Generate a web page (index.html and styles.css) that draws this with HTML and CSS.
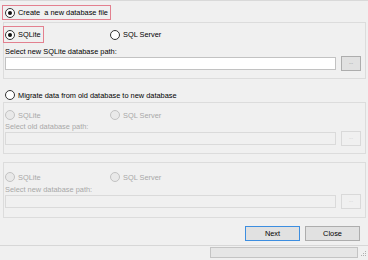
FILE: index.html
```html
<!DOCTYPE html>
<html lang="en">
<head>
    <meta charset="UTF-8">
    <title>Create Database</title>
    <link rel="stylesheet" href="styles.css">
</head>
<body>
    <div class="dialog">
        <!-- Create new database -->
        <label class="radio checked highlight create"><span class="dot"></span>Create  a new database file</label>

        <div class="group group-new">
            <div class="radio-row">
                <label class="radio checked highlight"><span class="dot"></span>SQLite</label>
                <label class="radio"><span class="dot"></span>SQL Server</label>
            </div>
            <p class="caption">Select new SQLite database path:</p>
            <div class="path-row">
                <div class="textbox"></div>
                <div class="browse">...</div>
            </div>
        </div>

        <!-- Migrate old database -->
        <label class="radio migrate"><span class="dot"></span>Migrate data from old database to new database</label>

        <div class="group group-old disabled">
            <div class="radio-row">
                <label class="radio"><span class="dot"></span>SQLite</label>
                <label class="radio"><span class="dot"></span>SQL Server</label>
            </div>
            <p class="caption">Select old database path:</p>
            <div class="path-row">
                <div class="textbox"></div>
                <div class="browse">...</div>
            </div>
        </div>

        <div class="group group-target disabled">
            <div class="radio-row">
                <label class="radio"><span class="dot"></span>SQLite</label>
                <label class="radio"><span class="dot"></span>SQL Server</label>
            </div>
            <p class="caption">Select new database path:</p>
            <div class="path-row">
                <div class="textbox"></div>
                <div class="browse">...</div>
            </div>
        </div>

        <div class="actions">
            <button class="next">Next</button>
            <button>Close</button>
        </div>

        <div class="statusbar">
            <div class="progress"></div>
            <svg class="grip" width="10" height="13" viewBox="0 0 10 13">
                <rect x="7" y="5" width="1" height="1" fill="#b0b0b0"/>
                <rect x="5" y="7" width="1" height="1" fill="#b0b0b0"/>
                <rect x="7" y="7" width="1" height="1" fill="#b0b0b0"/>
                <rect x="3" y="9" width="1" height="1" fill="#b0b0b0"/>
                <rect x="5" y="9" width="1" height="1" fill="#b0b0b0"/>
                <rect x="7" y="9" width="1" height="1" fill="#b0b0b0"/>
            </svg>
        </div>
    </div>
</body>
</html>
```

FILE: styles.css
```css
* {
    margin: 0;
    padding: 0;
    box-sizing: border-box;
}

body {
    width: 368px;
    height: 260px;
    overflow: hidden;
    background: #f0f0f0;
    font-family: "Liberation Sans", Arial, sans-serif;
    font-size: 7.4px;
    color: #000;
}

.dialog {
    height: 260px;
    border-top: 1px solid #d9d9d9;
    display: flex;
    flex-direction: column;
}

/* radio buttons */
.radio {
    display: flex;
    align-items: center;
    gap: 3px;
    white-space: pre;
    line-height: 9px;
}

.radio .dot {
    width: 10px;
    height: 10px;
    flex: none;
    border: 1px solid #333;
    border-radius: 50%;
    background: #fff;
    display: flex;
    justify-content: center;
    align-items: center;
}

.radio.checked .dot::after {
    content: "";
    width: 4px;
    height: 4px;
    border-radius: 50%;
    background: #111;
}

.highlight {
    border: 1px solid #e3808f;
}

.create {
    align-self: flex-start;
    height: 15px;
    margin: 4px 0 0 2px;
    padding: 0 2px 0 2px;
}

.migrate {
    height: 12px;
    margin: 10px 0 0 5px;
}

/* group boxes */
.group {
    width: 363px;
    margin-left: 3px;
    border: 1px solid #dcdcdc;
    padding: 0 4px 0 1px;
}

.group-new {
    height: 57px;
    margin-top: 2px;
    padding-top: 3px;
}

.group-old {
    height: 52px;
    margin-top: 1px;
    padding-top: 7px;
}

.group-target {
    height: 56px;
    margin-top: 8px;
    padding-top: 9px;
}

.radio-row {
    display: grid;
    grid-template-columns: 105px auto;
    height: 10px;
    align-items: center;
}

.radio-row .radio {
    justify-self: start;
}

.group-new .radio-row {
    height: 17px;
}

.group-new .radio.highlight {
    height: 17px;
    margin-left: -2px;
    padding: 0 2px 0 1px;
}

.caption {
    line-height: 9px;
    margin-top: 2px;
}

.group-new .caption {
    margin-top: 4px;
}

.group-target .caption {
    margin-top: 3px;
}

.path-row {
    display: flex;
    align-items: center;
    gap: 5px;
    height: 15px;
}

.textbox {
    flex: 1;
    height: 13px;
    border: 1px solid #c2c2c2;
    background: #fff;
}

.browse {
    width: 20px;
    height: 15px;
    border: 1px solid #adadad;
    background: #e1e1e1;
    color: #808080;
    font-size: 5px;
    line-height: 11px;
    text-align: center;
}

.disabled {
    color: #a8a8a8;
}

.disabled .radio .dot {
    border-color: #c2c2c2;
    background: #e9e9e9;
}

.disabled .textbox {
    border-color: #dadada;
    background: #f0f0f0;
}

.disabled .browse {
    border-color: #d9d9d9;
    background: #f0f0f0;
    color: #c4c4c4;
}

/* bottom buttons */
.actions {
    display: flex;
    justify-content: flex-end;
    gap: 5px;
    margin-top: 8px;
    padding-right: 8px;
}

button {
    width: 55px;
    height: 15px;
    border: 1px solid #adadad;
    background: #e1e1e1;
    font: inherit;
    color: #000;
}

button.next {
    border-color: #3d8ee0;
}

.statusbar {
    flex: 1;
    margin-top: 4px;
    border-top: 1px solid #d7d7d7;
    display: flex;
    justify-content: flex-end;
    align-items: flex-start;
}

.progress {
    width: 148px;
    height: 11px;
    margin-top: 1px;
    border: 1px solid #c4c4c4;
    background: #e6e6e6;
}

.grip {
    display: block;
}
```
